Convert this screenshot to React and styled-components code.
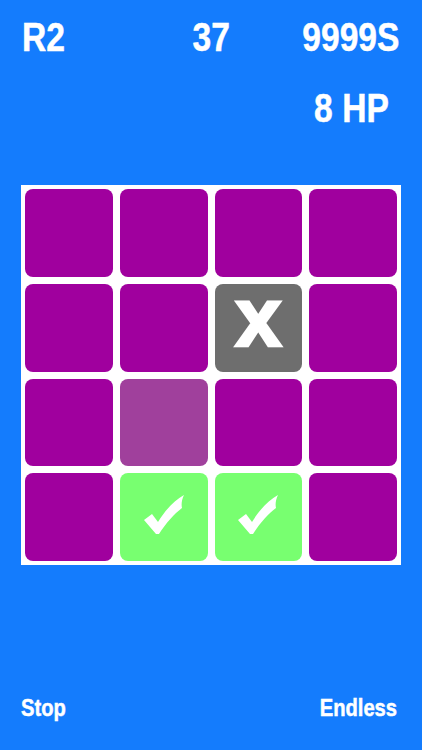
import React from 'react';
import styled, { createGlobalStyle } from 'styled-components';

const BLUE = '#147cfd';

const GlobalStyle = createGlobalStyle`
  html, body {
    margin: 0;
    padding: 0;
    background: ${BLUE};
  }
`;

const Screen = styled.div`
  width: 422px;
  height: 750px;
  display: flex;
  flex-direction: column;
  background: ${BLUE};
  color: #fff;
  font-family: 'Liberation Sans', Arial, sans-serif;
  font-weight: 700;
  overflow: hidden;
`;

const TopBar = styled.div`
  display: grid;
  grid-template-columns: 1fr auto 1fr;
  align-items: start;
  padding: 17px 22px 0 22px;
  font-size: 40px;
  line-height: 40px;
`;

// condensed look: Arial-width glyphs squeezed horizontally
const Label = styled.span`
  display: inline-block;
  white-space: nowrap;
  transform: scaleX(0.84);
  transform-origin: ${p => p.origin || 'center'};
  -webkit-text-stroke: 0.5px #fff;
`;

const LeftCell = styled.div`
  justify-self: start;
`;

const MidCell = styled.div`
  justify-self: center;
`;

const RightCell = styled.div`
  justify-self: end;
  margin-right: -9px;
  display: flex;
  flex-direction: column;
  align-items: center;
  gap: 31px;
`;

const Board = styled.div`
  align-self: center;
  margin-top: 57px;
  width: 380px;
  height: 380px;
  box-sizing: border-box;
  padding: 4px;
  background: #fff;
  display: grid;
  grid-template-columns: repeat(4, 1fr);
  grid-template-rows: repeat(4, 1fr);
  gap: 7px;
`;

const TILE_COLORS = {
  on: '#a0009e',
  faded: '#a0409c',
  hit: '#78ff70',
  miss: '#6e6e6e',
};

const Tile = styled.div`
  border-radius: 8px;
  background: ${p => TILE_COLORS[p.kind]};
  display: flex;
  align-items: center;
  justify-content: center;
`;

const Cross = styled.span`
  font-family: 'Liberation Sans', Arial, sans-serif;
  font-weight: 700;
  font-size: 84px;
  line-height: 1;
  color: #fff;
  -webkit-text-stroke: 2.5px #fff;
  margin-top: -21px;
`;

const Footer = styled.div`
  margin-top: auto;
  display: flex;
  justify-content: space-between;
  padding: 0 25px 30px 21px;
  font-size: 24px;
  line-height: 24px;
`;

const Check = () => (
  <svg width="42" height="40" viewBox="0 0 40 40" style={{ marginTop: -4 }}>
    <path
      d="M0 25 L8 19 L14 27 C22 14 30 6 40 0 C38 4 37 9 38 13 C30 19 22 28 15 39 L12 39 Z"
      fill="#fff"
    />
  </svg>
);

const board = [
  'on', 'on', 'on', 'on',
  'on', 'on', 'miss', 'on',
  'on', 'faded', 'on', 'on',
  'on', 'hit', 'hit', 'on',
];

export default function App() {
  return (
    <>
      <GlobalStyle />
      <Screen>
        <TopBar>
          <LeftCell>
            <Label origin="left">R2</Label>
          </LeftCell>
          <MidCell>
            <Label>37</Label>
          </MidCell>
          <RightCell>
            <Label>9999S</Label>
            <Label>8 HP</Label>
          </RightCell>
        </TopBar>
        <Board>
          {board.map((kind, i) => (
            <Tile key={i} kind={kind}>
              {kind === 'miss' && <Cross>x</Cross>}
              {kind === 'hit' && <Check />}
            </Tile>
          ))}
        </Board>
        <Footer>
          <Label origin="left">Stop</Label>
          <Label origin="right">Endless</Label>
        </Footer>
      </Screen>
    </>
  );
}
